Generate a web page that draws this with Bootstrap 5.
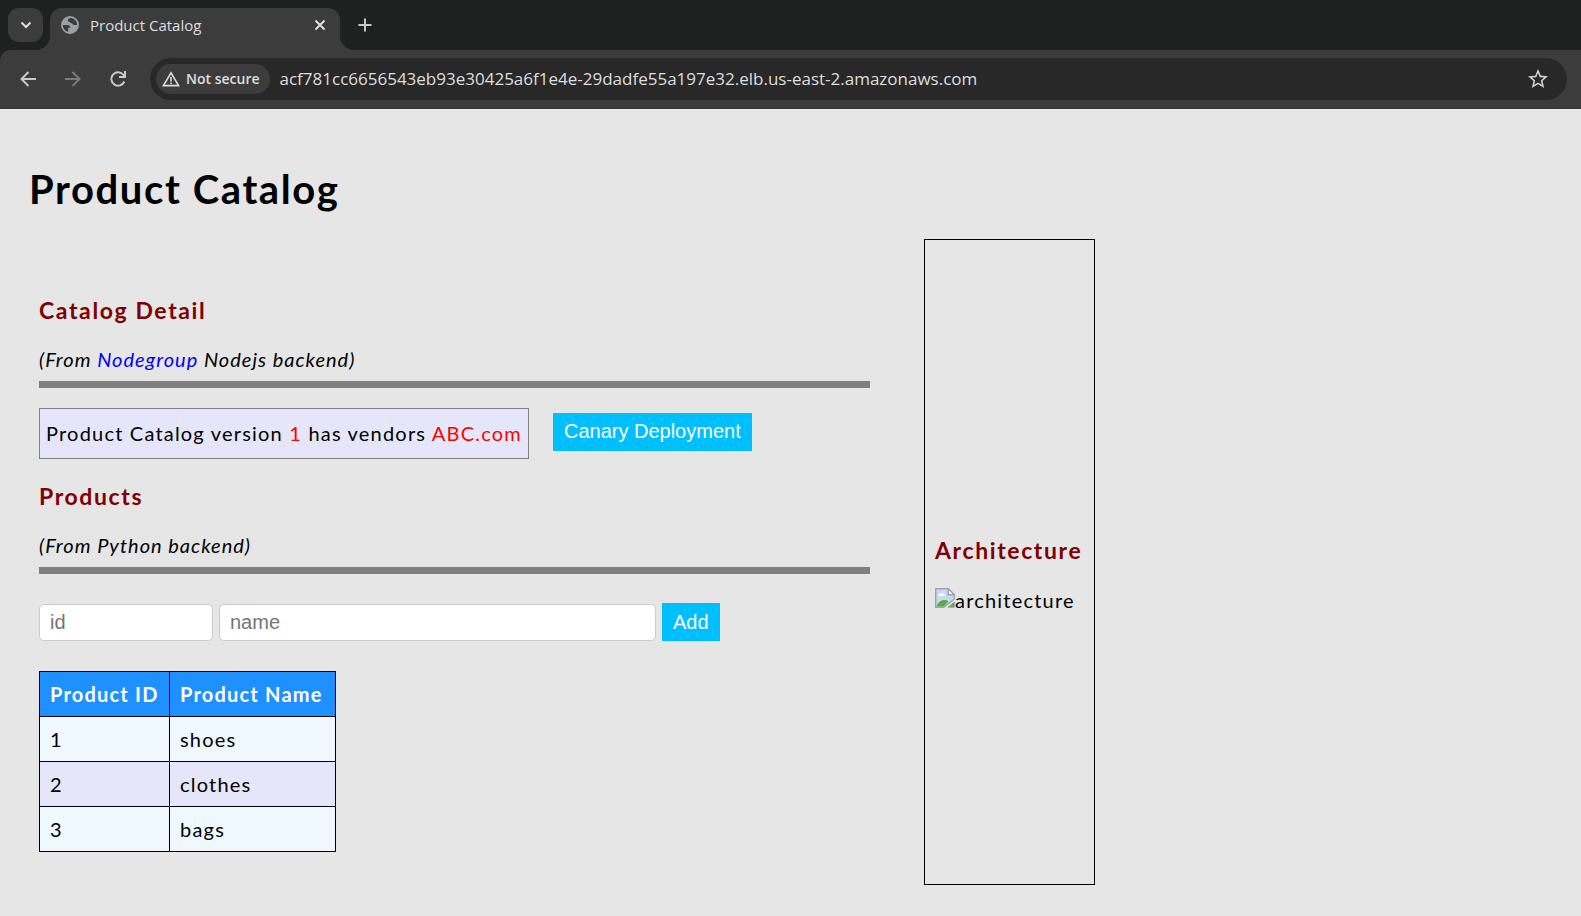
<!DOCTYPE html>
<html lang="en">
<head>
<meta charset="utf-8">
<meta name="viewport" content="width=device-width, initial-scale=1">
<title>Product Catalog</title>
<link href="https://cdn.jsdelivr.net/npm/bootstrap@5.3.0/dist/css/bootstrap.min.css" rel="stylesheet">
<style>
  :root { --strip: #1f2120; --bar: #3c3c3c; --omni: #282828; --ink: #dedede; }
  body { background: #e6e6e6; color: #000; font-family: Lato, sans-serif; font-size: 20px; line-height: 24px; }

  /* Browser window */
  .chrome { font-family: "Open Sans", "Noto Sans", sans-serif; color: var(--ink); background: var(--strip); }
  .chrome button { background: none; border: 0; padding: 0; color: inherit; display: flex; align-items: center; justify-content: center; }
  .chrome svg { display: block; flex: none; }
  .tab-strip { height: 50px; padding: 8px 8px 0; }
  .chrome .tab-search { width: 35px; height: 34px; border-radius: 11px; background: var(--bar); }
  .page-tab { width: 290px; height: 42px; margin-left: 7px; padding: 0 14px 8px 11px; border-radius: 12px 12px 0 0; background: var(--bar); font-size: 15px; line-height: 20px; }
  .page-tab::before, .page-tab::after { content: ""; position: absolute; bottom: 0; width: 14px; height: 14px; }
  .page-tab::before { right: 100%; background: radial-gradient(circle at 0 0, transparent 14px, var(--bar) 14px); }
  .page-tab::after { left: 100%; background: radial-gradient(circle at 100% 0, transparent 14px, var(--bar) 14px); }
  .page-tab span { margin-left: 11px; }
  .chrome .new-tab { width: 34px; height: 34px; margin-left: 8px; }
  .tool-bar { height: 59px; padding: 0 14px 1px 10px; background: var(--bar); border-radius: 10px 0 0 0; }
  .chrome .nav-btn { width: 36px; height: 36px; margin-right: 9px; }
  .omnibox { height: 42px; margin-left: 5px; padding: 0 17px 0 6px; border-radius: 21px; background: var(--omni); }
  .chrome .site-chip { height: 30px; padding: 0 10px 0 6px; gap: 6px; border-radius: 15px; background: var(--bar); font-size: 14px; line-height: 20px; font-weight: 600; white-space: nowrap; }
  .url-field { min-width: 0; margin-left: 10px; padding: 0; border: 0; background: none; color: var(--ink); font-size: 17px; line-height: 24px; outline: 0; }

  /* Page */
  .catalog { padding: 56px 35px 31px 29px; letter-spacing: .06em; }
  .catalog h1 { margin: 0 0 26px; font-size: 40px; line-height: 48px; font-weight: 700; letter-spacing: .04em; }
  .catalog h2 { margin: 0; font-size: 23px; line-height: 28px; font-weight: 700; letter-spacing: .07em; color: maroon; }
  .details { width: 59%; padding: 57px 54px 33px 10px; }
  .details section + section { margin-top: 23px; }
  .source { margin: 23px 0 10px; font-style: italic; letter-spacing: .05em; }
  .source a { color: blue; text-decoration: none; }
  .rule { height: 7px; margin: 0; border: 0; opacity: 1; background: gray; }
  .version { padding: 12px 6px 13px; border: 1px solid gray; background: #e6e6fa; }
  .version span { color: red; }
  .act { height: 38px; padding: 0 11px; border: 0; background: #00bfff; color: #fff; font: 20px/24px "Liberation Sans", Arial, sans-serif; letter-spacing: 0; }
  .canary { margin-top: 5px; padding-bottom: 2px; }
  .add-form { margin-top: 29px; gap: 6px; }
  .entry { height: 37px; padding: 0 10px; border: 1px solid #ccc; border-radius: 5px; background: #fff; font: 20px/24px "Liberation Sans", Arial, sans-serif; }
  .entry::placeholder { color: #757575; }
  .entry-id { width: 174px; }
  .entry-name { width: 437px; }
  .products { margin-top: 30px; border-collapse: collapse; }
  .products th, .products td { padding: 10px; border: 1px solid #000; }
  .products th { min-width: 130px; background: #1e90ff; color: #fff; font-weight: 700; }
  .products th + th { min-width: 166px; }
  .products td { background: #f0f8ff; }
  .products tr:nth-child(even) td { background: #e6e6fa; }
  .architecture { min-width: 171px; padding: 33px 10px 10px; border: 1px solid #000; }
  .architecture figure { margin: 24px 0 0; }
</style>
</head>
<body>
<header class="chrome">
  <div class="tab-strip d-flex">
    <button class="tab-search" aria-label="Search tabs"><svg width="12" height="8" viewBox="0 0 12 8" fill="none" stroke="currentColor" stroke-width="2"><path d="M1.5 1.5 6 6l4.500-4.500"/></svg></button>
    <div class="page-tab position-relative d-flex align-items-center">
      <svg width="18" height="18" viewBox="2 2 20 20"><path fill="#9aa0a6" fill-rule="evenodd" d="M12 2a10 10 0 1 0 0 20 10 10 0 0 0 0-20Zm1 2.200c4 .5 7 3.900 7 7.800h-3.500c-1.500 0-1.700-2-3-2-1.500 0-1-1.500-2.500-1.500-1 0-1.500-.5-1.500-1.500C9.500 5.500 11 4.300 13 4.200ZM4 12h5c2.500 0 3.300 1.500 3.300 3H10v3.200c0 .8-.5 1-.5 1.500C6 18.500 4 15.500 4 12Z"/></svg>
      <span class="me-auto">Product Catalog</span>
      <button aria-label="Close tab"><svg width="12" height="12" viewBox="0 0 12 12" stroke="currentColor" stroke-width="2"><path d="m1.500 1.500 9 9m0-9-9 9"/></svg></button>
    </div>
    <button class="new-tab" aria-label="New tab"><svg width="14" height="14" viewBox="0 0 14 14" stroke="#c8c8c8" stroke-width="2"><path d="M7 .5v13M.5 7h13"/></svg></button>
  </div>
  <div class="tool-bar d-flex align-items-center">
    <button class="nav-btn" aria-label="Back"><svg width="16" height="16" viewBox="0 0 16 16" fill="none" stroke="#c8c8c8" stroke-width="2"><path d="M8.500 1 1.500 8l7 7M1.500 8H16"/></svg></button>
    <button class="nav-btn" aria-label="Forward" disabled><svg width="16" height="16" viewBox="0 0 16 16" fill="none" stroke="#7b7b7b" stroke-width="2"><path d="m7.500 1 7 7-7 7M14.500 8H0"/></svg></button>
    <button class="nav-btn" aria-label="Reload"><svg width="16" height="16" viewBox="0 0 16 16" fill="none" stroke="#c8c8c8" stroke-width="2"><path d="M14.300 10.500A6.700 6.700 0 1 1 13.500 4L15 6M15 0v6H9"/></svg></button>
    <div class="omnibox d-flex align-items-center flex-grow-1">
      <button class="site-chip"><svg width="18" height="16" viewBox="0 0 18 16" fill="none" stroke="currentColor" stroke-width="1.600"><path d="M9 1.800 1.400 14.600h15.200ZM9 6v4.500M9 11.500v1.600"/></svg>Not secure</button>
      <input class="url-field flex-grow-1" type="text" aria-label="Address" value="acf781cc6656543eb93e30425a6f1e4e-29dadfe55a197e32.elb.us-east-2.amazonaws.com">
      <button aria-label="Bookmark this page"><svg width="24" height="24" viewBox="0 0 24 24" fill="#d0d0d0" fill-rule="evenodd"><path d="m22 9.240-7.190-.62L12 2 9.190 8.630 2 9.240l5.460 4.730L5.820 21 12 17.270 18.180 21l-1.630-7.030ZM12 15.400l-3.760 2.270 1-4.280-3.320-2.880 4.380-.38L12 6.100l1.710 4.040 4.380.38-3.320 2.880 1 4.280Z"/></svg></button>
    </div>
  </div>
</header>

<main class="catalog">
  <h1>Product Catalog</h1>
  <div class="d-flex align-items-stretch">
    <div class="details flex-shrink-0">
      <section>
        <h2>Catalog Detail</h2>
        <p class="source">(From <a href="#">Nodegroup</a> Nodejs backend)</p>
        <hr class="rule">
        <div class="d-flex align-items-start mt-3 pt-1 gap-4">
          <div class="version">Product Catalog version <span>1</span> has vendors <span>ABC.com</span></div>
          <button class="act canary">Canary Deployment</button>
        </div>
      </section>
      <section>
        <h2>Products</h2>
        <p class="source">(From Python backend)</p>
        <hr class="rule">
        <form class="add-form d-flex align-items-end">
          <input class="entry entry-id" type="text" placeholder="id" aria-label="id">
          <input class="entry entry-name" type="text" placeholder="name" aria-label="name">
          <button class="act" type="button">Add</button>
        </form>
        <table class="products">
          <thead><tr><th scope="col">Product ID</th><th scope="col">Product Name</th></tr></thead>
          <tbody>
            <tr><td>1</td><td>shoes</td></tr>
            <tr><td>2</td><td>clothes</td></tr>
            <tr><td>3</td><td>bags</td></tr>
          </tbody>
        </table>
      </section>
    </div>
    <aside class="architecture d-flex flex-column justify-content-center">
      <h2>Architecture</h2>
      <figure class="d-flex">
        <svg width="20" height="20" viewBox="0 0 20 20" aria-hidden="true"><path d="M.7.7h12.600l6 6V11L9 19.300H.7Z" fill="#c5d8f7" stroke="#a3a3a3" stroke-width="1.400"/><path d="M3 8c0-1.500 1-2 2-2 .5-1.500 3-1.500 3.500 0C10 6 10.500 7 10.500 8Z" fill="#fff"/><path d="M1.400 18.600C3 13 9 10 13.500 13.500L8.500 18.600Z" fill="#56ac3d"/><path d="M13.300.7v6h6Z" fill="#fff" stroke="#a3a3a3" stroke-width="1.400"/><path d="M13 19.300 19.300 14v5.300Z" fill="#56ac3d" stroke="#a3a3a3"/></svg>
        <figcaption>architecture</figcaption>
      </figure>
    </aside>
  </div>
</main>
<script src="https://cdn.jsdelivr.net/npm/bootstrap@5.3.0/dist/js/bootstrap.bundle.min.js"></script>
</body>
</html>
